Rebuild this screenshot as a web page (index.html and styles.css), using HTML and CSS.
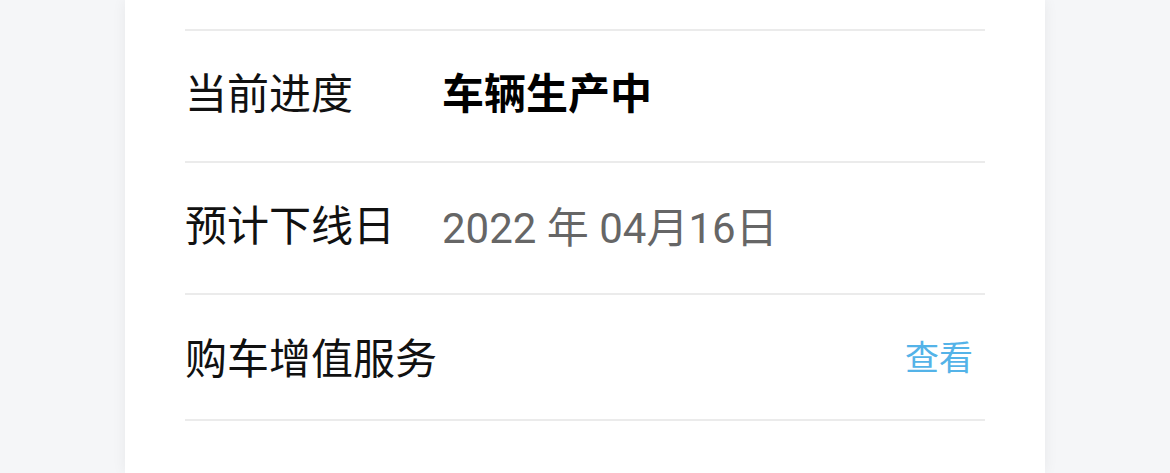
FILE: index.html
```html
<!DOCTYPE html>
<html lang="zh-CN">
<head>
<meta charset="utf-8">
<link rel="stylesheet" href="styles.css">
</head>
<body>
<div class="card">
  <div class="row row-top"></div>
  <div class="row row-a">
    <span class="label">当前进度</span>
    <span class="value strong">车辆生产中</span>
  </div>
  <div class="row row-b">
    <span class="label">预计下线日</span>
    <span class="value muted">2022 年 04月16日</span>
  </div>
  <div class="row row-c">
    <span class="label">购车增值服务</span>
    <span class="link">查看</span>
  </div>
  <div class="rest"></div>
</div>
</body>
</html>
```
FILE: styles.css
```css
html, body {
  margin: 0;
  padding: 0;
  height: 100%;
}
body {
  background: #f5f6f8;
  font-family: "Noto Sans CJK SC", "Noto Sans", sans-serif;
  overflow: hidden;
}
.card {
  margin: 0 125px;
  height: 100%;
  background: #ffffff;
  box-shadow: 0 0 14px rgba(0, 0, 0, 0.06);
  padding: 0 60px;
  display: flex;
  flex-direction: column;
}
.row {
  display: flex;
  align-items: center;
  border-bottom: 2px solid #ebebeb;
  box-sizing: border-box;
}
.row-top { height: 31px; }
.row-a { height: 132px; padding-bottom: 10px; }
.row-b { height: 132px; padding-bottom: 10px; }
.row-c { height: 126px; padding-bottom: 2px; justify-content: space-between; }
.label {
  width: 257px;
  flex: none;
  font-size: 42px;
  color: #111111;
  line-height: 1;
}
.value {
  font-size: 42px;
  line-height: 1;
}
.strong {
  font-weight: 600;
  color: #000000;
}
.muted {
  font-family: "Roboto", "Noto Sans CJK SC", sans-serif;
  color: #666666;
  padding-top: 12px;
}
.link {
  font-size: 34px;
  color: #54b3e8;
  margin-right: 12px;
  line-height: 1;
}
.rest { flex: 1; }
```
